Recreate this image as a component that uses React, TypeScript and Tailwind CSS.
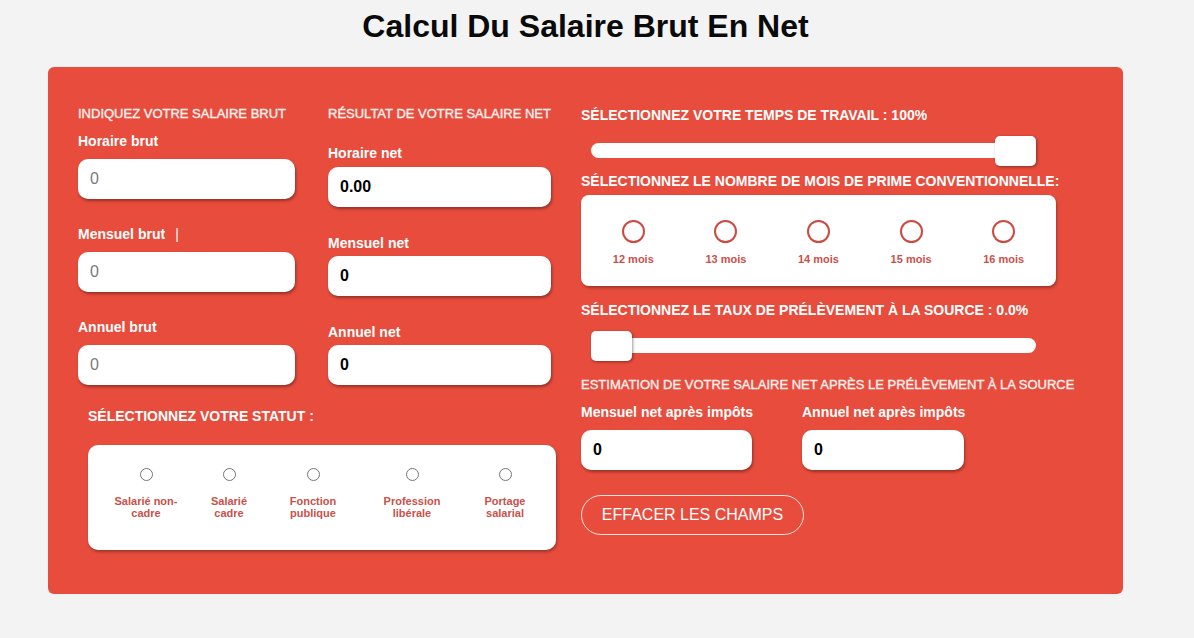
import React from "react";

const font = { fontFamily: '"Liberation Sans", Arial, sans-serif' };

function Input({ value, placeholder, w }: { value?: string; placeholder?: string; w: string }) {
  return (
    <div
      className={`${w} h-[40px] rounded-[10px] bg-white shadow-[1px_2px_3px_rgba(0,0,0,0.35)] flex items-center pl-[12px] text-[16px] leading-[18px]`}
    >
      {value !== undefined ? (
        <span className="font-bold text-black">{value}</span>
      ) : (
        <span className="text-[#7a7a7a]">{placeholder}</span>
      )}
    </div>
  );
}

function Slider({ pos }: { pos: "start" | "end" }) {
  return (
    <div className="relative ml-[10px] h-[30px] w-[445px]">
      <div className="absolute left-0 right-0 top-[7px] h-[15px] rounded-full bg-white" />
      <div
        className={`absolute top-0 h-[30px] w-[41px] rounded-[5px] bg-white shadow-[1px_1px_3px_rgba(0,0,0,0.4)] ${
          pos === "end" ? "right-0" : "left-0"
        }`}
      />
    </div>
  );
}

const statuts: { lines: string[]; w: string }[] = [
  { lines: ["Salarié non-", "cadre"], w: "w-[84px]" },
  { lines: ["Salarié", "cadre"], w: "w-[82px]" },
  { lines: ["Fonction", "publique"], w: "w-[86px]" },
  { lines: ["Profession", "libérale"], w: "w-[112px]" },
  { lines: ["Portage", "salarial"], w: "w-[74px]" },
];

export default function App() {
  return (
    <div className="min-h-[638px] w-full bg-[#f3f3f3]" style={font}>
      <div className="ml-[48px] w-[1075px] pt-[8px]">
        <h1 className="text-center text-[32px] font-bold leading-[37px] text-[#0a0a0a]">
          Calcul Du Salaire Brut En Net
        </h1>
        <div className="mt-[22px] h-[527px] rounded-[6px] bg-[#e74c3c] pl-[30px] pt-[39px] text-white">
          <div className="flex gap-[30px]">
            {/* Left block */}
            <div className="w-[473px]">
              <div className="flex gap-[33px]">
                {/* Col 1 */}
                <div className="w-[217px]">
                  <div className="text-[13px] leading-[15px] text-[#fdf1ef] whitespace-nowrap [-webkit-text-stroke:0.35px_#fdf1ef]">
                    INDIQUEZ VOTRE SALAIRE BRUT
                  </div>
                  <div className="mt-[12px] text-[14px] font-bold leading-[16px]">Horaire brut</div>
                  <div className="mt-[10px]">
                    <Input placeholder="0" w="w-[217px]" />
                  </div>
                  <div className="mt-[27px] text-[14px] font-bold leading-[16px]">
                    Mensuel brut<span className="ml-[10px] font-normal">|</span>
                  </div>
                  <div className="mt-[10px]">
                    <Input placeholder="0" w="w-[217px]" />
                  </div>
                  <div className="mt-[27px] text-[14px] font-bold leading-[16px]">Annuel brut</div>
                  <div className="mt-[10px]">
                    <Input placeholder="0" w="w-[217px]" />
                  </div>
                </div>
                {/* Col 2 */}
                <div className="w-[223px]">
                  <div className="text-[13px] leading-[15px] text-[#fdf1ef] whitespace-nowrap [-webkit-text-stroke:0.35px_#fdf1ef]">
                    RÉSULTAT DE VOTRE SALAIRE NET
                  </div>
                  <div className="mt-[24px] text-[14px] font-bold leading-[16px]">Horaire net</div>
                  <div className="mt-[6px]">
                    <Input value="0.00" w="w-[223px]" />
                  </div>
                  <div className="mt-[28px] text-[14px] font-bold leading-[16px]">Mensuel net</div>
                  <div className="mt-[5px]">
                    <Input value="0" w="w-[223px]" />
                  </div>
                  <div className="mt-[28px] text-[14px] font-bold leading-[16px]">Annuel net</div>
                  <div className="mt-[5px]">
                    <Input value="0" w="w-[223px]" />
                  </div>
                </div>
              </div>
              <div className="ml-[10px] mt-[23px] text-[14px] font-bold leading-[16px]">
                SÉLECTIONNEZ VOTRE STATUT :
              </div>
              <div className="ml-[10px] mt-[21px] flex h-[105px] w-[468px] rounded-[10px] bg-white pl-[16px] pt-[23px] shadow-[1px_2px_3px_rgba(0,0,0,0.3)]">
                {statuts.map((s) => (
                  <div key={s.lines.join()} className={`${s.w} flex flex-col items-center`}>
                    <div className="h-[13px] w-[13px] rounded-full border border-[#767676] bg-white" />
                    <div className="mt-[14px] text-center text-[11px] font-bold leading-[12px] text-[#c9514a]">
                      {s.lines.map((l) => (
                        <div key={l}>{l}</div>
                      ))}
                    </div>
                  </div>
                ))}
              </div>
            </div>

            {/* Right block */}
            <div className="mt-[1px] w-[475px]">
              <div className="text-[14px] font-bold leading-[16px] whitespace-nowrap">
                SÉLECTIONNEZ VOTRE TEMPS DE TRAVAIL : 100%
              </div>
              <div className="mt-[13px]">
                <Slider pos="end" />
              </div>
              <div className="mt-[7px] text-[14px] font-bold leading-[16px] whitespace-nowrap">
                SÉLECTIONNEZ LE NOMBRE DE MOIS DE PRIME CONVENTIONNELLE:
              </div>
              <div className="mt-[6px] flex h-[91px] w-[475px] rounded-[8px] bg-white px-[6px] pt-[25px] shadow-[1px_2px_3px_rgba(0,0,0,0.3)]">
                {["12 mois", "13 mois", "14 mois", "15 mois", "16 mois"].map((m) => (
                  <div key={m} className="flex flex-1 flex-col items-center">
                    <div className="h-[23px] w-[23px] rounded-full border-2 border-[#cc4a40] bg-white" />
                    <div className="mt-[10px] text-[11px] font-bold leading-[13px] text-[#c9514a]">{m}</div>
                  </div>
                ))}
              </div>
              <div className="mt-[16px] text-[14px] font-bold leading-[16px] whitespace-nowrap">
                SÉLECTIONNEZ LE TAUX DE PRÉLÈVEMENT À LA SOURCE : 0.0%
              </div>
              <div className="mt-[13px]">
                <Slider pos="start" />
              </div>
              <div className="mt-[16px] text-[13px] leading-[15px] text-[#fdf1ef] whitespace-nowrap [-webkit-text-stroke:0.35px_#fdf1ef]">
                ESTIMATION DE VOTRE SALAIRE NET APRÈS LE PRÉLÈVEMENT À LA SOURCE
              </div>
              <div className="mt-[12px] flex gap-[50px]">
                <div className="w-[171px]">
                  <div className="text-[14px] font-bold leading-[16px] whitespace-nowrap">Mensuel net après impôts</div>
                  <div className="mt-[10px]">
                    <Input value="0" w="w-[171px]" />
                  </div>
                </div>
                <div className="w-[162px]">
                  <div className="text-[14px] font-bold leading-[16px] whitespace-nowrap">Annuel net après impôts</div>
                  <div className="mt-[10px]">
                    <Input value="0" w="w-[162px]" />
                  </div>
                </div>
              </div>
              <button className="mt-[25px] flex h-[40px] w-[223px] items-center justify-center rounded-full border border-[#fbe3e0] text-[16px] leading-[18px] text-white">
                EFFACER LES CHAMPS
              </button>
            </div>
          </div>
        </div>
      </div>
    </div>
  );
}
